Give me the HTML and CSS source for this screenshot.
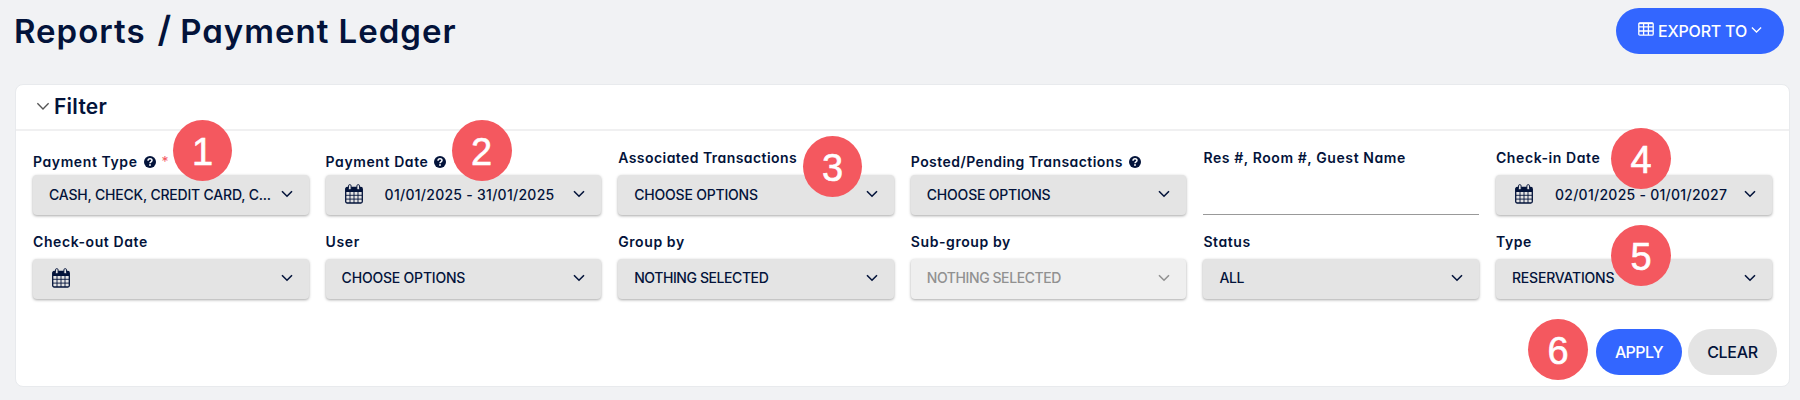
FILE: index.html
```html
<!DOCTYPE html>
<html lang="en">
<head>
  <meta charset="UTF-8">
  <meta name="viewport" content="width=device-width, initial-scale=1.0">
  <title>Payment Ledger</title>
  <link rel="stylesheet" href="styles.css">
</head>
<body>
  <svg class="sprite" width="0" height="0">
    <symbol id="chevron" viewBox="0 0 12 8">
      <path d="M1 1.2l5 5 5-5" fill="none" stroke="currentColor"/>
    </symbol>
    <symbol id="calendar" viewBox="0 0 18 20">
      <path d="M1 8V4.500Q1 3 2.500 3H15.500Q17 3 17 4.500V8Z" fill="currentColor"/>
      <rect x=".7" y="3.500" width="16.600" height="15.500" rx="1.500" fill="none" stroke="currentColor" stroke-width="1.300"/>
      <path d="M5 7v12M9 7v12M13 7v12M1 11.300h16M1 15.100h16" stroke="currentColor" stroke-width=".9"/>
      <rect x="3.500" y=".6" width="2.600" height="5.200" rx="1.300" fill="#e4e4e4" stroke="currentColor" stroke-width=".9"/>
      <rect x="11.900" y=".6" width="2.600" height="5.200" rx="1.300" fill="#e4e4e4" stroke="currentColor" stroke-width=".9"/>
    </symbol>
    <symbol id="help" viewBox="0 0 12 12">
      <circle cx="6" cy="6" r="6" fill="currentColor"/>
      <path d="M4 4.700C4.100 2.200 8 2.200 8 4.500C8 5.900 6 5.800 6 7.200" fill="none" stroke="#fff" stroke-width="1.500"/>
      <circle cx="6" cy="9" r=".95" fill="#fff"/>
    </symbol>
  </svg>

  <header class="page-header">
    <h1 class="title"><span>Reports</span><span class="slash">/</span><span>Payment Ledger</span></h1>
    <button class="btn btn-export">
      <svg class="table-icon" viewBox="0 0 16 14"><path d="M.8 2Q.8.800 2 .8H14Q15.200.8 15.200 2V12Q15.200 13.200 14 13.200H2Q.8 13.200.8 12ZM1 4.800h14M1 9h14M5.600 1v12M10.400 1v12" fill="none" stroke="currentColor" stroke-width="1.300"/><path d="M1 1.400h14" stroke="currentColor" stroke-width="1.500"/></svg>
      <span>EXPORT TO</span>
      <svg class="chevron"><use href="#chevron"/></svg>
    </button>
  </header>

  <main class="card">
    <div class="card-header">
      <svg class="chevron"><use href="#chevron"/></svg>
      <h2>Filter</h2>
    </div>
    <div class="filters">
      <div class="field">
        <label class="low"><span>Payment Type</span><svg class="help"><use href="#help"/></svg><i>*</i></label>
        <div class="select"><span class="value">CASH, CHECK, CREDIT CARD, C...</span><svg class="chevron"><use href="#chevron"/></svg></div>
        <b class="step step-1">1</b>
      </div>
      <div class="field">
        <label class="low"><span>Payment Date</span><svg class="help"><use href="#help"/></svg></label>
        <div class="select date"><svg class="calendar"><use href="#calendar"/></svg><span class="value">01/01/2025 - 31/01/2025</span><svg class="chevron"><use href="#chevron"/></svg></div>
        <b class="step step-2">2</b>
      </div>
      <div class="field">
        <label class="long"><span>Associated Transactions</span></label>
        <div class="select"><span class="value">CHOOSE OPTIONS</span><svg class="chevron"><use href="#chevron"/></svg></div>
        <b class="step step-3">3</b>
      </div>
      <div class="field">
        <label class="low long"><span>Posted/Pending Transactions</span><svg class="help"><use href="#help"/></svg></label>
        <div class="select"><span class="value">CHOOSE OPTIONS</span><svg class="chevron"><use href="#chevron"/></svg></div>
      </div>
      <div class="field">
        <label><span>Res #, Room #, Guest Name</span></label>
        <div class="text-input"></div>
      </div>
      <div class="field">
        <label><span>Check-in Date</span></label>
        <div class="select date"><svg class="calendar"><use href="#calendar"/></svg><span class="value">02/01/2025 - 01/01/2027</span><svg class="chevron"><use href="#chevron"/></svg></div>
        <b class="step step-4">4</b>
      </div>
      <div class="field">
        <label><span>Check-out Date</span></label>
        <div class="select"><svg class="calendar"><use href="#calendar"/></svg><svg class="chevron"><use href="#chevron"/></svg></div>
      </div>
      <div class="field">
        <label><span>User</span></label>
        <div class="select"><span class="value">CHOOSE OPTIONS</span><svg class="chevron"><use href="#chevron"/></svg></div>
      </div>
      <div class="field">
        <label><span>Group by</span></label>
        <div class="select empty"><span class="value">NOTHING SELECTED</span><svg class="chevron"><use href="#chevron"/></svg></div>
      </div>
      <div class="field">
        <label><span>Sub-group by</span></label>
        <div class="select empty disabled"><span class="value">NOTHING SELECTED</span><svg class="chevron"><use href="#chevron"/></svg></div>
      </div>
      <div class="field">
        <label><span>Status</span></label>
        <div class="select empty"><span class="value">ALL</span><svg class="chevron"><use href="#chevron"/></svg></div>
      </div>
      <div class="field">
        <label><span>Type</span></label>
        <div class="select"><span class="value">RESERVATIONS</span><svg class="chevron"><use href="#chevron"/></svg></div>
        <b class="step step-5">5</b>
      </div>
    </div>
    <div class="actions">
      <b class="step step-6">6</b>
      <button class="btn btn-apply"><span>APPLY</span></button>
      <button class="btn btn-clear"><span>CLEAR</span></button>
    </div>
  </main>
</body>
</html>
```
FILE: styles.css
```css
* {
  box-sizing: border-box;
}
body {
  margin: 0;
  height: 400px;
  overflow: hidden;
  background: #f1f2f4;
  color: #03133a;
  font-family: Inter, "Open Sans", sans-serif;
  font-feature-settings: "cv11";
}
.sprite {
  position: absolute;
}
.page-header {
  display: flex;
  justify-content: space-between;
  align-items: flex-start;
  height: 84px;
  padding: 8px 16px 0 14px;
}
.title {
  display: flex;
  margin: 0;
  font-size: 33px;
  line-height: 46px;
  font-weight: 600;
  letter-spacing: 1px;
}
.slash {
  margin: 0 9px 0 12px;
  font-size: 36px;
  line-height: 43px;
  letter-spacing: 0;
}
.btn {
  display: flex;
  align-items: center;
  justify-content: center;
  height: 46px;
  padding: 0;
  border: 0;
  border-radius: 23px;
  font-family: inherit;
  font-feature-settings: inherit;
  font-size: 16px;
  font-weight: 500;
}
.btn-export {
  width: 168px;
  gap: 4px;
  background: #3366ff;
  color: #fff;
  letter-spacing: -0.2px;
}
.btn-export .chevron {
  width: 11px;
  margin-top: -2px;
  stroke-width: 1.4;
}
.table-icon {
  width: 16px;
  height: 14px;
  margin-top: -4px;
}
.chevron {
  flex: none;
  width: 12px;
  height: 8px;
  stroke-width: 1.6;
}
.card {
  width: 1775px;
  height: 303px;
  margin-left: 15px;
  background: #fff;
  border: 1px solid #e8eaed;
  border-radius: 8px;
}
.card-header {
  display: flex;
  align-items: center;
  gap: 4px;
  height: 46px;
  padding: 0 0 1px 20px;
  border-bottom: 2px solid #f0f0f1;
}
.card-header .chevron {
  width: 14px;
  height: 9px;
  color: #555;
  stroke-width: 1.2;
}
.card-header h2 {
  margin: 0;
  font-size: 21px;
  font-weight: 600;
  letter-spacing: 0.25px;
}
.filters {
  display: grid;
  grid-template-columns: repeat(6, 275.6px);
  column-gap: 17px;
  padding: 14.6px 0 0 17px;
}
.field {
  position: relative;
  height: 83.9px;
}
label {
  display: flex;
  align-items: center;
  height: 24px;
  margin-bottom: 5.2px;
  font-size: 14px;
  font-weight: 600;
  letter-spacing: 0.59px;
}
label.long {
  letter-spacing: 0.44px;
}
label.low {
  position: relative;
  top: 4px;
}
.help {
  width: 12px;
  height: 12px;
  margin-left: 6px;
}
label i {
  margin-left: 6px;
  color: #f4585f;
  font-style: normal;
  font-weight: 400;
}
.select {
  display: flex;
  align-items: center;
  height: 40.6px;
  padding: 0 16px 2px;
  background: #e4e4e4;
  border-radius: 4px;
  box-shadow: 0 1px 3px rgba(0, 0, 0, 0.35);
  font-size: 14px;
  font-weight: 500;
  letter-spacing: -0.2px;
}
.select.empty {
  letter-spacing: -0.42px;
}
.select.date {
  letter-spacing: 0.27px;
}
.select .chevron {
  margin-left: auto;
}
.select.disabled {
  background: #efefef;
  color: #919191;
}
.calendar {
  width: 18px;
  height: 20px;
  margin-left: 3px;
}
.date .value {
  margin-left: 22px;
}
.text-input {
  height: 40px;
  border-bottom: 1px solid #999;
}
.actions {
  position: relative;
  display: flex;
  justify-content: flex-end;
  gap: 6px;
  padding: 15.6px 12px 0 0;
}
.btn-apply {
  width: 86px;
  background: #3366ff;
  color: #fff;
  letter-spacing: -0.6px;
}
.btn-clear {
  width: 89px;
  background: #e4e4e4;
  color: #03133a;
  letter-spacing: -0.3px;
}
.step {
  position: absolute;
  width: 60px;
  height: 61px;
  border-radius: 50%;
  background: #f4585f;
  color: #fff;
  font: 38px/64px "Liberation Sans", sans-serif;
  text-align: center;
  -webkit-text-stroke: 0.6px #fff;
}
.step-1 { left: 140px; top: -26px; width: 59px; }
.step-2 { left: 126px; top: -26px; }
.step-3 { left: 185px; top: -10px; width: 59px; }
.step-4 { left: 115px; top: -18px; }
.step-5 { left: 115px; top: -4px; }
.step-6 { right: 201px; top: 6px; }
```
